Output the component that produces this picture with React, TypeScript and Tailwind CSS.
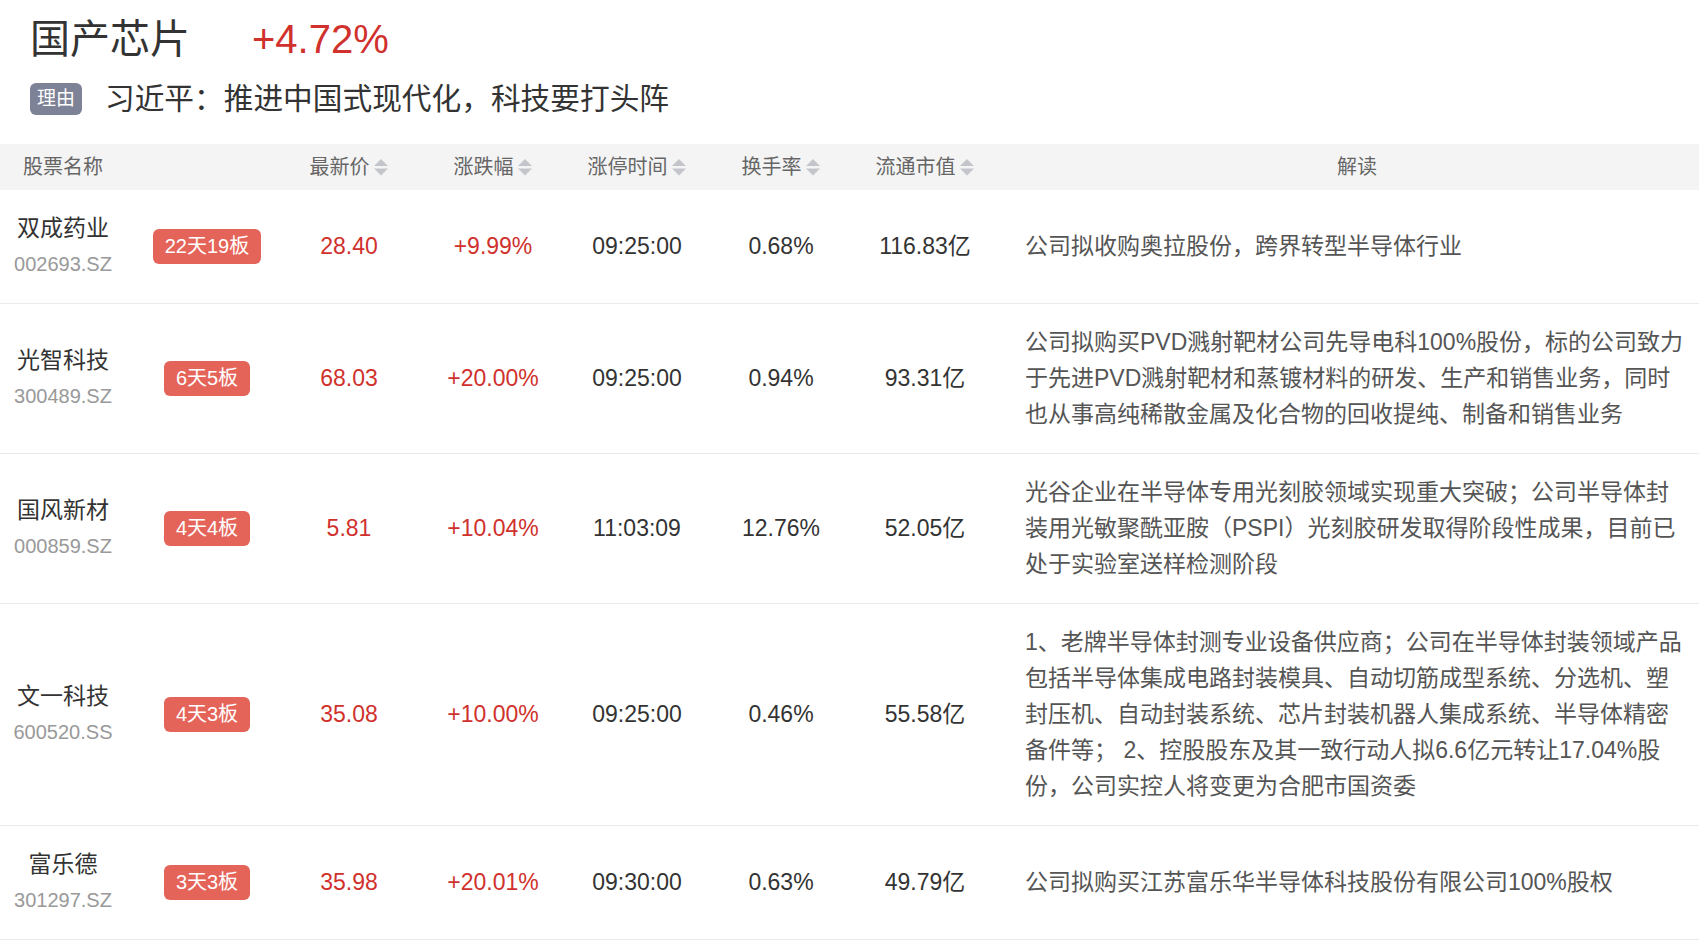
import React from "react";

const FONT = {
  fontFamily: '"Liberation Sans", Arial, "Noto Sans CJK SC", sans-serif',
};

type Row = {
  name: string;
  code: string;
  badge: string;
  price: string;
  change: string;
  time: string;
  turnover: string;
  cap: string;
  text: string;
};

const rows: Row[] = [
  {
    name: "双成药业",
    code: "002693.SZ",
    badge: "22天19板",
    price: "28.40",
    change: "+9.99%",
    time: "09:25:00",
    turnover: "0.68%",
    cap: "116.83亿",
    text: "公司拟收购奥拉股份，跨界转型半导体行业",
  },
  {
    name: "光智科技",
    code: "300489.SZ",
    badge: "6天5板",
    price: "68.03",
    change: "+20.00%",
    time: "09:25:00",
    turnover: "0.94%",
    cap: "93.31亿",
    text: "公司拟购买PVD溅射靶材公司先导电科100%股份，标的公司致力于先进PVD溅射靶材和蒸镀材料的研发、生产和销售业务，同时也从事高纯稀散金属及化合物的回收提纯、制备和销售业务",
  },
  {
    name: "国风新材",
    code: "000859.SZ",
    badge: "4天4板",
    price: "5.81",
    change: "+10.04%",
    time: "11:03:09",
    turnover: "12.76%",
    cap: "52.05亿",
    text: "光谷企业在半导体专用光刻胶领域实现重大突破；公司半导体封装用光敏聚酰亚胺（PSPI）光刻胶研发取得阶段性成果，目前已处于实验室送样检测阶段",
  },
  {
    name: "文一科技",
    code: "600520.SS",
    badge: "4天3板",
    price: "35.08",
    change: "+10.00%",
    time: "09:25:00",
    turnover: "0.46%",
    cap: "55.58亿",
    text: "1、老牌半导体封测专业设备供应商；公司在半导体封装领域产品包括半导体集成电路封装模具、自动切筋成型系统、分选机、塑封压机、自动封装系统、芯片封装机器人集成系统、半导体精密备件等； 2、控股股东及其一致行动人拟6.6亿元转让17.04%股份，公司实控人将变更为合肥市国资委",
  },
  {
    name: "富乐德",
    code: "301297.SZ",
    badge: "3天3板",
    price: "35.98",
    change: "+20.01%",
    time: "09:30:00",
    turnover: "0.63%",
    cap: "49.79亿",
    text: "公司拟购买江苏富乐华半导体科技股份有限公司100%股权",
  },
];

function SortIcon() {
  return (
    <svg width="16" height="20" viewBox="0 0 16 20" className="ml-[3px]">
      <path d="M1 9 L8 2 L15 9 Z" fill="#c3c5cb" />
      <path d="M1 11.5 L8 18.5 L15 11.5 Z" fill="#c3c5cb" />
    </svg>
  );
}

const GRID =
  "grid grid-cols-[126px_151px_144px_144px_144px_144px_144px_1fr]";

function HeaderCell({ label }: { label: string }) {
  return (
    <div className="flex items-center justify-center">
      <span>{label}</span>
      <SortIcon />
    </div>
  );
}

export default function App() {
  return (
    <div className="w-[1699px] bg-white text-[#333]" style={FONT}>
      <div className="pl-[30px] pt-[15px]">
        <div className="flex items-center h-[48px]">
          <span className="text-[40px] leading-[48px] text-[#333]">国产芯片</span>
          <span className="ml-[62px] text-[40px] leading-[48px] text-[#d0312d]">
            +4.72%
          </span>
        </div>
        <div className="mt-[16px] flex items-center h-[40px]">
          <span className="inline-flex h-[32px] w-[52px] items-center justify-center rounded-[6px] bg-[#7d8296] text-[19px] text-white">
            理由
          </span>
          <span className="ml-[23px] text-[29.7px] leading-[40px] text-[#333]">
            习近平：推进中国式现代化，科技要打头阵
          </span>
        </div>
      </div>

      <div className="mt-[25px]">
        <div
          className={`${GRID} h-[46px] items-center bg-[#f4f4f4] text-[20px] text-[#666]`}
        >
          <div className="text-center">股票名称</div>
          <div />
          <HeaderCell label="最新价" />
          <HeaderCell label="涨跌幅" />
          <HeaderCell label="涨停时间" />
          <HeaderCell label="换手率" />
          <HeaderCell label="流通市值" />
          <div className="pl-[28px] pr-[10px] text-center">解读</div>
        </div>

        {rows.map((r) => (
          <div
            key={r.code}
            className={`${GRID} items-center border-b border-[#ebebeb] pt-[20px] pb-[21px] text-[23px] leading-[36px]`}
          >
            <div className="flex flex-col items-center">
              <span className="text-[#333]">{r.name}</span>
              <span className="text-[20px] text-[#999]">{r.code}</span>
            </div>
            <div className="flex justify-center pl-[11px]">
              <span className="inline-flex h-[35px] items-center rounded-[6px] bg-[#e5645a] px-[12px] text-[20px] leading-none text-white">
                {r.badge}
              </span>
            </div>
            <div className="text-center text-[#d0312d]">{r.price}</div>
            <div className="text-center text-[#d0312d]">{r.change}</div>
            <div className="text-center">{r.time}</div>
            <div className="text-center">{r.turnover}</div>
            <div className="text-center">{r.cap}</div>
            <div className="pl-[28px] pr-[10px] text-[#555]">{r.text}</div>
          </div>
        ))}
      </div>
    </div>
  );
}
